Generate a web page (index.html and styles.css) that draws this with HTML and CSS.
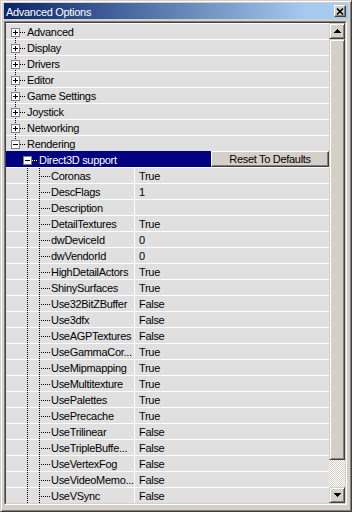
FILE: index.html
```html
<!DOCTYPE html>
<html>
<head>
    <title>Advanced Options</title>
    <link rel="stylesheet" href="styles.css">
</head>
<body>
    <div class="window">
        <div class="titlebar">
            <span class="title">Advanced Options</span>
            <button class="close-btn">
                <svg width="8" height="7" viewBox="0 0 8 7"><path d="M1 0.5L7 6.5M7 0.5L1 6.5" stroke="#000" stroke-width="1.6"/></svg>
            </button>
        </div>

        <div class="frame">
            <div class="frame-inner">
                <div class="tree">
                    <div class="row cat first"><span class="box plus"></span><span class="label">Advanced</span></div>
                    <div class="row cat"><span class="box plus"></span><span class="label">Display</span></div>
                    <div class="row cat"><span class="box plus"></span><span class="label">Drivers</span></div>
                    <div class="row cat"><span class="box plus"></span><span class="label">Editor</span></div>
                    <div class="row cat"><span class="box plus"></span><span class="label">Game Settings</span></div>
                    <div class="row cat"><span class="box plus"></span><span class="label">Joystick</span></div>
                    <div class="row cat"><span class="box plus"></span><span class="label">Networking</span></div>
                    <div class="row cat last"><span class="box minus"></span><span class="label">Rendering</span></div>

                    <div class="row group">
                        <div class="group-label"><span class="box minus"></span><span class="label">Direct3D support</span></div>
                        <button class="reset">Reset To Defaults</button>
                    </div>

                    <div class="row prop"><span class="name">Coronas</span><span class="value">True</span></div>
                    <div class="row prop"><span class="name">DescFlags</span><span class="value">1</span></div>
                    <div class="row prop"><span class="name">Description</span><span class="value"></span></div>
                    <div class="row prop"><span class="name">DetailTextures</span><span class="value">True</span></div>
                    <div class="row prop"><span class="name">dwDeviceId</span><span class="value">0</span></div>
                    <div class="row prop"><span class="name">dwVendorId</span><span class="value">0</span></div>
                    <div class="row prop"><span class="name">HighDetailActors</span><span class="value">True</span></div>
                    <div class="row prop"><span class="name">ShinySurfaces</span><span class="value">True</span></div>
                    <div class="row prop"><span class="name">Use32BitZBuffer</span><span class="value">False</span></div>
                    <div class="row prop"><span class="name">Use3dfx</span><span class="value">False</span></div>
                    <div class="row prop"><span class="name">UseAGPTextures</span><span class="value">False</span></div>
                    <div class="row prop"><span class="name">UseGammaCor...</span><span class="value">True</span></div>
                    <div class="row prop"><span class="name">UseMipmapping</span><span class="value">True</span></div>
                    <div class="row prop"><span class="name">UseMultitexture</span><span class="value">True</span></div>
                    <div class="row prop"><span class="name">UsePalettes</span><span class="value">True</span></div>
                    <div class="row prop"><span class="name">UsePrecache</span><span class="value">True</span></div>
                    <div class="row prop"><span class="name">UseTrilinear</span><span class="value">False</span></div>
                    <div class="row prop"><span class="name">UseTripleBuffe...</span><span class="value">False</span></div>
                    <div class="row prop"><span class="name">UseVertexFog</span><span class="value">False</span></div>
                    <div class="row prop"><span class="name">UseVideoMemo...</span><span class="value">False</span></div>
                    <div class="row prop"><span class="name">UseVSync</span><span class="value">False</span></div>
                </div>

                <div class="scrollbar">
                    <div class="sb-btn">
                        <svg width="7" height="4" viewBox="0 0 7 4"><path d="M3 0h1v1H3zM2 1h3v1H2zM1 2h5v1H1zM0 3h7v1H0z"/></svg>
                    </div>
                    <div class="sb-thumb"></div>
                    <div class="sb-track"></div>
                    <div class="sb-btn">
                        <svg width="7" height="4" viewBox="0 0 7 4"><path d="M0 0h7v1H0zM1 1h5v1H1zM2 2h3v1H2zM3 3h1v1H3z"/></svg>
                    </div>
                </div>
            </div>
        </div>
    </div>
</body>
</html>
```

FILE: styles.css
```css
body {
    margin: 0;
    background: #d4d0c8;
    font-family: "Liberation Sans", Arial, sans-serif;
    font-size: 11px;
    letter-spacing: -0.3px;
}
.window {
    width: 352px;
    height: 512px;
    box-sizing: border-box;
    border: 1px solid;
    border-color: #d4d0c8 #404040 #404040 #d4d0c8;
    box-shadow: inset 1px 1px #fff, inset -1px -1px #808080;
    padding: 2px 3px 0 3px;
}
.titlebar {
    height: 16px;
    margin-bottom: 2px;
    padding-left: 2px;
    display: flex;
    align-items: center;
    justify-content: space-between;
    background: linear-gradient(to right, #0a246a, #a6caf0 88%);
    color: #fff;
}
.title {
    padding-top: 2px;
}
.close-btn {
    width: 12px;
    height: 12px;
    margin-right: 2px;
    padding: 0;
    box-sizing: border-box;
    border: 1px solid;
    border-color: #fff #404040 #404040 #fff;
    box-shadow: inset -1px -1px #808080;
    background: #d4d0c8;
    display: flex;
    align-items: center;
    justify-content: center;
}
.frame {
    width: 343px;
    height: 484px;
    box-sizing: border-box;
    border: 1px solid;
    border-color: #808080 #fff #fff #808080;
}
.frame-inner {
    height: 100%;
    box-sizing: border-box;
    border: 1px solid;
    border-color: #404040 #d4d0c8 #d4d0c8 #404040;
    display: flex;
}
.tree {
    width: 323px;
    background: #e0e0e0;
    overflow: hidden;
}
.row {
    height: 16px;
    box-sizing: border-box;
    padding-top: 1px;
    border-top: 1px solid #fff;
    display: flex;
    align-items: flex-start;
    line-height: 14px;
    white-space: nowrap;
    background-color: #e0e0e0;
    background-repeat: no-repeat;
}
.box {
    width: 9px;
    height: 9px;
    margin-top: 3px;
    box-sizing: border-box;
    border: 1px solid #808080;
    flex: none;
}
.box.plus {
    background:
        linear-gradient(#000, #000) 1px 3px / 5px 1px no-repeat,
        linear-gradient(#000, #000) 3px 1px / 1px 5px no-repeat,
        #fff;
}
.box.minus {
    background:
        linear-gradient(#000, #000) 1px 3px / 5px 1px no-repeat,
        #fff;
}

/* top level categories */
.cat {
    padding-left: 5px;
    background-image:
        repeating-linear-gradient(to bottom, #000 0 1px, transparent 1px 2px),
        repeating-linear-gradient(to right, #000 0 1px, transparent 1px 2px);
    background-position: 9px 0, 14px 8px;
    background-size: 1px 15px, 6px 1px;
}
.cat.first {
    background-position: 9px 8px, 14px 8px;
    background-size: 1px 7px, 6px 1px;
}
.cat.last {
    background-size: 1px 8px, 6px 1px;
}
.cat .label {
    margin-left: 7px;
}

/* selected group row */
.row.group {
    border-top: 0;
    padding-top: 0;
}
.group-label {
    flex: 1;
    height: 16px;
    box-sizing: border-box;
    padding: 2px 0 0 17px;
    display: flex;
    align-items: flex-start;
    color: #fff;
    background-color: #000080;
    background-image:
        repeating-linear-gradient(to right, #fff 0 1px, transparent 1px 2px),
        repeating-linear-gradient(to bottom, #000 0 1px, transparent 1px 2px);
    background-position: 26px 9px, 21px 14px;
    background-size: 6px 1px, 1px 2px;
    background-repeat: no-repeat;
}
.group-label .label {
    margin-left: 7px;
}
.reset {
    width: 118px;
    height: 16px;
    padding: 1px 0 0;
    box-sizing: border-box;
    border: 1px solid;
    border-color: #fff #404040 #404040 #fff;
    box-shadow: inset -1px -1px #808080;
    background: #d4d0c8;
    font: inherit;
    letter-spacing: inherit;
    line-height: 13px;
    color: #000;
}

/* property rows */
.prop {
    background-image:
        repeating-linear-gradient(to bottom, #000 0 1px, transparent 1px 2px),
        repeating-linear-gradient(to bottom, #000 0 1px, transparent 1px 2px),
        repeating-linear-gradient(to right, #000 0 1px, transparent 1px 2px),
        linear-gradient(#fff, #fff);
    background-position: 21px 0, 33px 0, 35px 8px, 128px 0;
    background-size: 1px 15px, 1px 15px, 9px 1px, 1px 15px;
}
.name {
    width: 129px;
    box-sizing: border-box;
    padding-left: 45px;
    padding-right: 1px;
    overflow: hidden;
}
.value {
    padding-left: 4px;
}

/* scrollbar */
.scrollbar {
    width: 16px;
    display: flex;
    flex-direction: column;
}
.sb-btn,
.sb-thumb {
    box-sizing: border-box;
    border: 1px solid;
    border-color: #d4d0c8 #404040 #404040 #d4d0c8;
    box-shadow: inset 1px 1px #fff, inset -1px -1px #808080;
    background: #d4d0c8;
}
.sb-btn {
    height: 16px;
    display: flex;
    align-items: center;
    justify-content: center;
}
.sb-thumb {
    height: 421px;
}
.sb-track {
    flex: 1;
    background: repeating-conic-gradient(#d4d0c8 0 25%, #fff 0 50%) 0 0 / 2px 2px;
}
```
